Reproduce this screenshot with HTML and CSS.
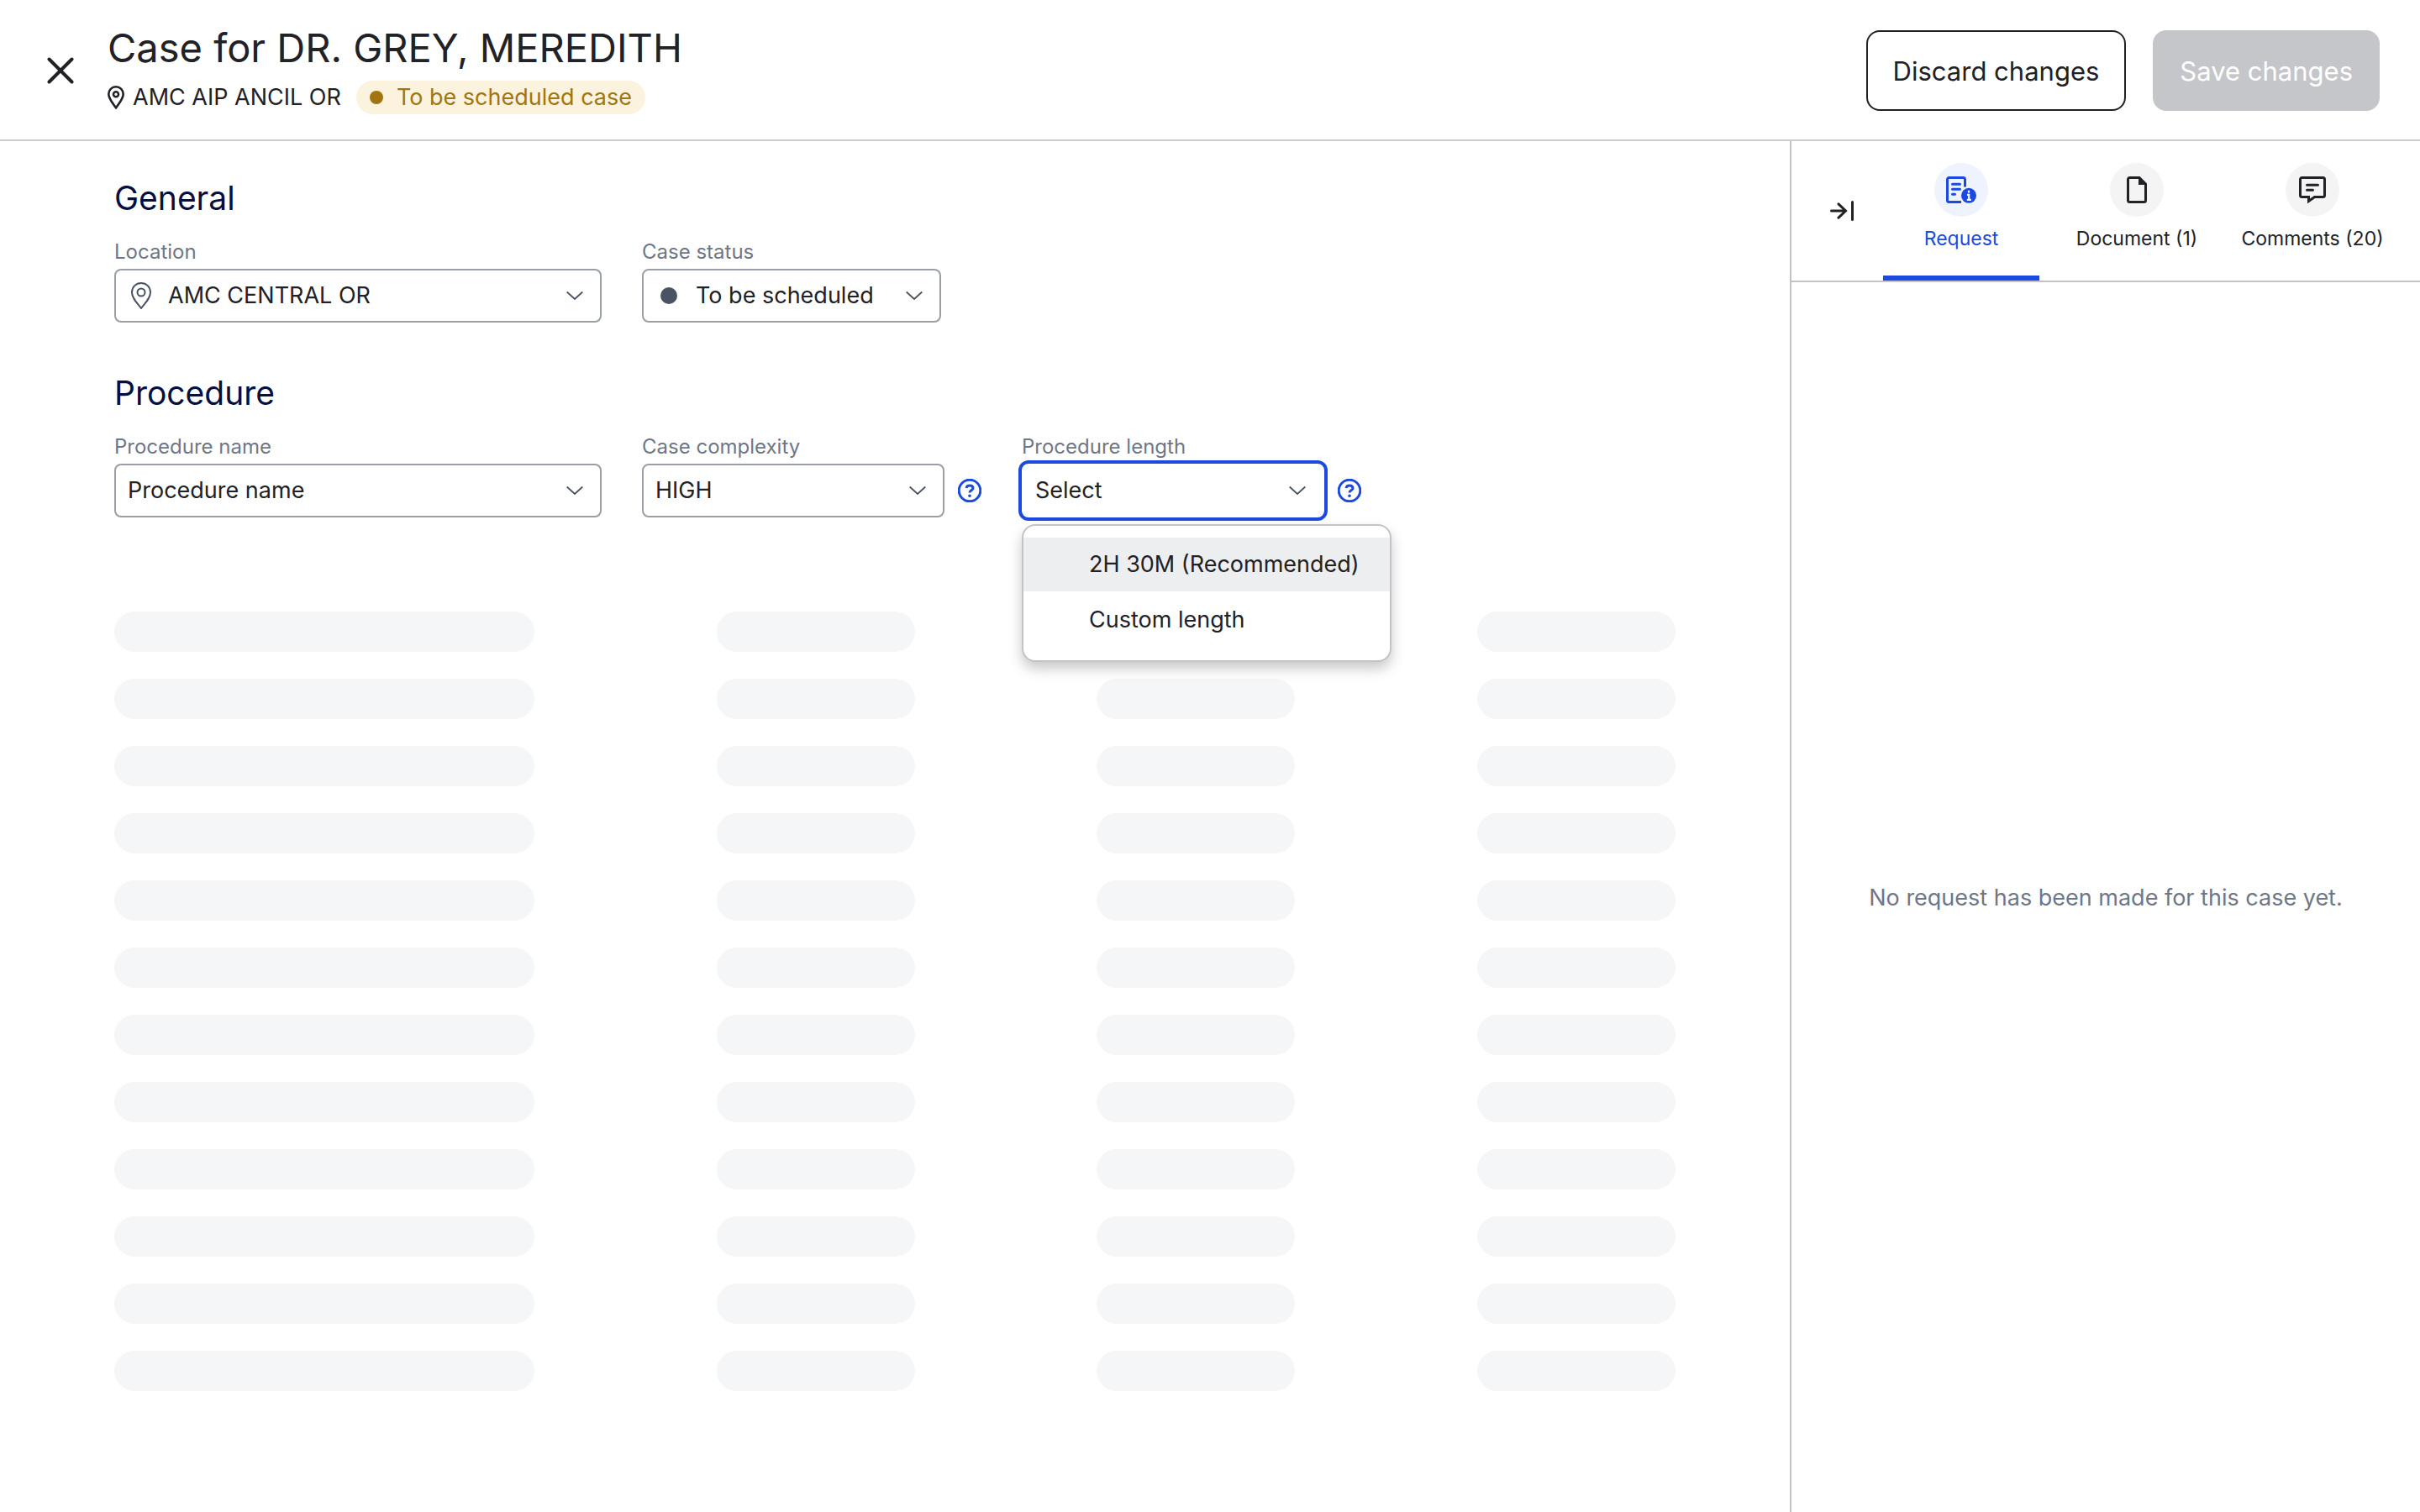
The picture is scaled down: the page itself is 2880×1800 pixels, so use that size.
FILE: index.html
```html
<!DOCTYPE html>
<html lang="en">
<head>
<meta charset="utf-8">
<title>Case for DR. GREY, MEREDITH</title>
<link rel="stylesheet" href="styles.css">
</head>
<body>
<header class="topbar">
  <button class="icon-btn close" aria-label="Close">
    <svg width="32" height="32" viewBox="0 0 32 32"><path d="M2.500 2.500 29.500 29.500M29.500 2.500 2.500 29.500"/></svg>
  </button>
  <div class="case-title">
    <h1>Case for DR. GREY, MEREDITH</h1>
    <div class="case-meta">
      <span class="place">
        <svg class="pin-bold" width="20" height="28" viewBox="0 0 20 28"><path d="M10 1.300c-4.900 0-8.700 3.800-8.700 8.600C1.300 15.500 6 20.500 10 26.300c4-5.800 8.700-10.800 8.700-16.400 0-4.800-3.800-8.600-8.700-8.600z"/><circle cx="10" cy="10.200" r="3"/></svg>
        AMC AIP ANCIL OR
      </span>
      <span class="pill">To be scheduled case</span>
    </div>
  </div>
  <div class="actions">
    <button class="btn">Discard changes</button>
    <button class="btn btn-disabled" disabled>Save changes</button>
  </div>
</header>

<div class="workspace">
  <main class="form">
    <section class="section">
      <h2>General</h2>
      <div class="fields">
        <div class="field wide">
          <label for="location">Location</label>
          <div class="control">
            <svg class="lead pin-thin" width="24" height="32" viewBox="0 0 24 32"><path d="M12 1C5.800 1 1 5.700 1 12c0 7 6 12.500 11 19 5-6.500 11-12 11-19C23 5.700 18.200 1 12 1z"/><circle cx="12" cy="12" r="4.500"/></svg>
            <select id="location" class="with-lead"><option>AMC CENTRAL OR</option></select>
            <svg class="chevron" width="20" height="12" viewBox="0 0 20 12"><path d="M.7 1.500 10 10 19.300 1.500"/></svg>
          </div>
        </div>
        <div class="field status">
          <label for="status">Case status</label>
          <div class="control">
            <span class="lead dot"></span>
            <select id="status" class="with-lead"><option>To be scheduled</option></select>
            <svg class="chevron" width="20" height="12" viewBox="0 0 20 12"><path d="M.7 1.500 10 10 19.300 1.500"/></svg>
          </div>
        </div>
      </div>
    </section>

    <section class="section">
      <h2>Procedure</h2>
      <div class="fields">
        <div class="field wide">
          <label for="procedure">Procedure name</label>
          <div class="control">
            <select id="procedure"><option>Procedure name</option></select>
            <svg class="chevron" width="20" height="12" viewBox="0 0 20 12"><path d="M.7 1.500 10 10 19.300 1.500"/></svg>
          </div>
        </div>
        <div class="with-help">
          <div class="field">
            <label for="complexity">Case complexity</label>
            <div class="control">
              <select id="complexity"><option>HIGH</option></select>
              <svg class="chevron" width="20" height="12" viewBox="0 0 20 12"><path d="M.7 1.500 10 10 19.300 1.500"/></svg>
            </div>
          </div>
          <button class="icon-btn help" aria-label="About case complexity">
            <svg width="28" height="28" viewBox="0 0 28 28"><circle cx="14" cy="14" r="12.800"/><path d="M10 11c.3-2 1.800-3 4-3 2.400 0 4 1.200 4 3.200 0 2.600-4 2.700-4 5.300"/><circle class="fill" cx="14" cy="20.300" r="1.800"/></svg>
          </button>
        </div>
        <div class="with-help">
          <div class="field">
            <label for="length">Procedure length</label>
            <div class="control active">
              <select id="length"><option>Select</option></select>
              <svg class="chevron" width="20" height="12" viewBox="0 0 20 12"><path d="M.7 1.500 10 10 19.300 1.500"/></svg>
              <ul class="menu" role="listbox" aria-label="Procedure length">
                <li role="option" aria-selected="true" class="highlighted">2H 30M (Recommended)</li>
                <li role="option" aria-selected="false">Custom length</li>
              </ul>
            </div>
          </div>
          <button class="icon-btn help" aria-label="About procedure length">
            <svg width="28" height="28" viewBox="0 0 28 28"><circle cx="14" cy="14" r="12.800"/><path d="M10 11c.3-2 1.800-3 4-3 2.400 0 4 1.200 4 3.200 0 2.600-4 2.700-4 5.300"/><circle class="fill" cx="14" cy="20.300" r="1.800"/></svg>
          </button>
        </div>
      </div>
    </section>

    <div class="skeleton" aria-hidden="true">
      <i></i><i></i><i></i><i></i>
      <i></i><i></i><i></i><i></i>
      <i></i><i></i><i></i><i></i>
      <i></i><i></i><i></i><i></i>
      <i></i><i></i><i></i><i></i>
      <i></i><i></i><i></i><i></i>
      <i></i><i></i><i></i><i></i>
      <i></i><i></i><i></i><i></i>
      <i></i><i></i><i></i><i></i>
      <i></i><i></i><i></i><i></i>
      <i></i><i></i><i></i><i></i>
      <i></i><i></i><i></i><i></i>
    </div>
  </main>

  <aside class="panel">
    <div class="panel-head">
      <button class="icon-btn collapse" aria-label="Collapse panel">
        <svg width="28" height="24" viewBox="0 0 28 24"><path d="M1.500 12H18M10 3.800 18.500 12 10 20.200M26.500 1.500v21"/></svg>
      </button>
      <div class="tabs" role="tablist">
        <button class="tab selected" role="tab" aria-selected="true">
          <span class="badge"><svg width="36" height="32" viewBox="0 0 36 32"><path d="M18 30.500H3.500a2 2 0 0 1-2-2v-25a2 2 0 0 1 2-2h17a2 2 0 0 1 2 2V12.500"/><path class="round" d="M7.500 9.300h9M7.500 15.300h9M7.500 21.300h3"/><circle class="fill" cx="27" cy="22.800" r="9"/><path class="cut" d="M25 21.800h2.200v6M24.800 27.800h5M27 16.800v2.800"/></svg></span>
          Request
        </button>
        <button class="tab" role="tab" aria-selected="false">
          <span class="badge"><svg width="24" height="32" viewBox="0 0 24 32"><path d="M3.500 1.500H15L22.500 9v19.500a2 2 0 0 1-2 2h-17a2 2 0 0 1-2-2v-25a2 2 0 0 1 2-2z"/><path class="fill" d="M14 1.500V10h9V8z"/></svg></span>
          Document (1)
        </button>
        <button class="tab" role="tab" aria-selected="false">
          <span class="badge"><svg width="32" height="32" viewBox="0 0 32 32"><path d="M3.500 1.500h25a2 2 0 0 1 2 2v19a2 2 0 0 1-2 2H18.500l-7 5V24.500h-8a2 2 0 0 1-2-2v-19a2 2 0 0 1 2-2z"/><path class="round" d="M9.500 10.300h13M9.500 16.300h7"/></svg></span>
          Comments (20)
        </button>
      </div>
    </div>
    <p class="empty">No request has been made for this case yet.</p>
  </aside>
</div>
</body>
</html>
```
FILE: styles.css
```css
* { box-sizing: border-box; }

body {
  margin: 0;
  min-height: 100vh;
  display: flex;
  flex-direction: column;
  background: #fff;
  color: #212126;
  font-family: Inter, "Liberation Sans", sans-serif;
  font-size: 27px;
  line-height: 32px;
}

h1, h2, p, ul { margin: 0; padding: 0; }
button, select { font: inherit; color: inherit; }
svg { display: block; fill: none; stroke: currentColor; stroke-width: 3; }
svg .fill { fill: currentColor; stroke: none; }
svg .round { stroke-linecap: round; }

.icon-btn { padding: 0; border: 0; background: none; }

/* Top bar */
.topbar {
  display: flex;
  align-items: center;
  min-height: 168px;
  padding: 2px 48px 0 56px;
  border-bottom: 2px solid #c9ced3;
}
.close svg { stroke-width: 4; stroke-linecap: round; }
.case-title {
  display: flex;
  flex-direction: column;
  gap: 10px;
  margin: 0 auto 0 40px;
  padding-bottom: 4px;
}
h1 { font-size: 47px; line-height: 58px; font-weight: 400; }
.case-meta { display: flex; align-items: center; gap: 18px; }
.place { display: flex; align-items: center; gap: 10px; }
.pin-bold { stroke-width: 2.6; }
.pill {
  display: flex;
  align-items: center;
  gap: 16px;
  height: 40px;
  padding: 0 16px;
  border-radius: 20px;
  background: #fbf3de;
  color: #a17512;
}
.pill::before {
  content: "";
  width: 16px;
  height: 16px;
  border-radius: 50%;
  background: currentColor;
}
.actions { display: flex; gap: 32px; }
.btn {
  height: 96px;
  padding: 2px 30px 0;
  border: 2px solid #212126;
  border-radius: 16px;
  background: #fff;
  font-size: 31px;
}
.btn-disabled { border-color: #c5c6ca; background: #c5c6ca; color: #fff; }

/* Workspace */
.workspace { flex: 1; display: flex; }
.form { flex: 1; min-width: 0; padding: 44px 136px; }
.section { margin-bottom: 60px; }
h2 {
  margin-bottom: 26px;
  color: #060f42;
  font-size: 39px;
  line-height: 48px;
  font-weight: 400;
}
.fields { display: flex; gap: 48px; }
.field { display: flex; flex-direction: column; gap: 6px; width: 360px; }
.wide { width: 580px; }
.status { width: 356px; }
label { color: #6f7685; font-size: 24px; line-height: 28px; }
.with-help { display: flex; align-items: flex-end; gap: 16px; }
.help { height: 64px; color: #1c4ae0; }

.control { position: relative; height: 64px; }
.control select {
  width: 100%;
  height: 100%;
  padding: 0 56px 0 14px;
  border: 2px solid #9a9ea5;
  border-radius: 8px;
  background: #fff;
  appearance: none;
}
.control .with-lead { padding-left: 62px; }
.lead { position: absolute; top: 16px; left: 20px; color: #4b5362; }
.pin-thin { stroke-width: 2; }
.dot {
  top: 22px;
  left: 22px;
  width: 20px;
  height: 20px;
  border-radius: 50%;
  background: currentColor;
}
.chevron {
  position: absolute;
  top: 26px;
  right: 22px;
  color: #4b5362;
  stroke-width: 1.8;
  pointer-events: none;
}
.active select { border-color: #fff; box-shadow: 0 0 0 4px #1c4ae0; }

.menu {
  position: absolute;
  z-index: 1;
  top: 72px;
  left: 0;
  width: 440px;
  padding: 14px 0 16px;
  border: 2px solid #c3c4c9;
  border-radius: 16px;
  background: #fff;
  box-shadow: 0 8px 16px rgba(0, 0, 0, 0.22);
  list-style: none;
}
.menu li { padding: 16px 0 16px 78px; white-space: nowrap; }
.menu li + li { margin-top: 2px; }
.highlighted { background: #edeef0; }

.skeleton {
  display: grid;
  grid-template-columns: 500px repeat(3, 236px);
  justify-content: space-between;
  row-gap: 32px;
  padding-top: 52px;
}
.skeleton i { height: 48px; border-radius: 24px; background: #f5f6f8; }

/* Side panel */
.panel {
  display: flex;
  flex-direction: column;
  width: 750px;
  border-left: 2px solid #c3c4c9;
}
.panel-head {
  display: flex;
  align-items: center;
  height: 168px;
  padding: 0 35px 0 46px;
  border-bottom: 2px solid #c3c4c9;
}
.collapse svg { stroke-linecap: round; }
.tabs {
  flex: 1;
  display: grid;
  grid-template-columns: repeat(3, 1fr);
  gap: 23px;
  height: 100%;
  margin-left: 35px;
}
.tab {
  display: flex;
  flex-direction: column;
  align-items: center;
  gap: 12px;
  padding: 26px 0 0;
  border: 0;
  border-bottom: 6px solid transparent;
  background: none;
  font-size: 23px;
  line-height: 28px;
  white-space: nowrap;
}
.selected { border-color: #1c4ae0; color: #1c4ae0; }
.badge {
  display: grid;
  place-items: center;
  width: 64px;
  height: 64px;
  border-radius: 50%;
  background: #f4f4f4;
}
.selected .badge { background: #eff3fd; }
.cut { stroke: #fff; stroke-width: 2.2; }
.empty { margin: auto; padding-top: 2px; color: #6f7685; }
```
